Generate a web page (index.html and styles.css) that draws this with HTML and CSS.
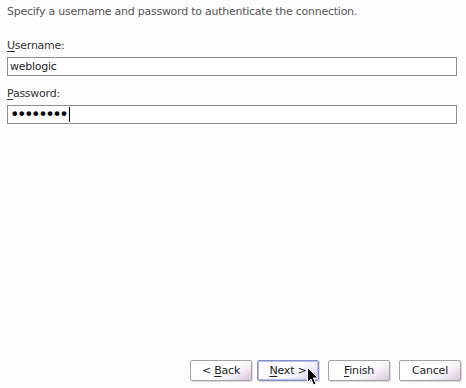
FILE: index.html
```html
<!DOCTYPE html>
<html lang="en">
<head>
    <meta charset="UTF-8">
    <title>Create Connection - Authentication</title>
    <link rel="stylesheet" href="styles.css">
</head>
<body>
    <div class="wizard">
        <p class="intro">Specify a username and password to authenticate the connection.</p>

        <div class="field">
            <label class="field-label"><u>U</u>sername:</label>
            <div class="text-field">weblogic</div>
        </div>

        <div class="field">
            <label class="field-label"><u>P</u>assword:</label>
            <div class="text-field focused"><span class="dots">••••••••</span><span class="caret"></span></div>
        </div>

        <div class="footer">
            <button class="btn">&lt; <u>B</u>ack</button>
            <button class="btn default"><u>N</u>ext &gt;</button>
            <button class="btn wide-gap"><u>F</u>inish</button>
            <button class="btn wide-gap">Cancel</button>

            <!-- mouse pointer sitting on Next -->
            <svg class="pointer" width="12" height="19" viewBox="0 0 12 19">
                <path d="M0.5 0.5 L0.5 15.5 L4 12 L6.5 18 L9 17 L6.5 11 L11 11 Z" fill="#000" stroke="#fff" stroke-width="1"/>
            </svg>
        </div>
    </div>
</body>
</html>
```

FILE: styles.css
```css
* { margin: 0; padding: 0; box-sizing: border-box; }
body {
    font-family: 'DejaVu Sans', sans-serif;
    font-size: 11px;
    letter-spacing: -0.25px;
    background-color: #fcfdfc;
    color: #333;
}
.wizard {
    width: 466px;
    height: 388px;
    display: flex;
    flex-direction: column;
    padding: 5px 9px 0 7px;
}
.intro {
    color: #555;
    line-height: 14px;
    margin-bottom: 20px;
}
.field {
    display: flex;
    flex-direction: column;
}
.field-label {
    line-height: 14px;
    margin-bottom: 4px;
}
.field-label u {
    text-decoration-thickness: 1px;
    text-underline-offset: 2px;
}
.text-field {
    height: 19px;
    border: 1px solid #8e8e8e;
    background-color: #fff;
    color: #222;
    padding: 0 2px;
    line-height: 17px;
    display: flex;
    align-items: center;
    margin-bottom: 11px;
}
.dots {
    font-size: 16px;
    line-height: 17px;
    letter-spacing: -2.4px;
    color: #000;
}
.caret {
    width: 1px;
    height: 15px;
    background: #000;
    margin-left: 3px;
}
.footer {
    margin-top: auto;
    position: relative;
    display: flex;
    justify-content: flex-end;
    padding: 0 0 7px;
    margin-right: -4px;
}
.btn {
    width: 62px;
    height: 21px;
    font-family: 'DejaVu Sans', sans-serif;
    font-size: 11px;
    letter-spacing: -0.2px;
    color: #222;
    border: 1px solid #a3a3a3;
    border-radius: 2px;
    background: linear-gradient(150deg, #ffffff 55%, #f1eaf3 75%, #d9c4dd 100%);
    box-shadow: 1px 1px 0 #e4d6e6;
    margin-left: 5px;
}
.btn u {
    text-underline-offset: 2px;
}
.btn.default {
    border-color: #8490c8;
    background: linear-gradient(150deg, #fdfdff 50%, #ebe8f7 75%, #c9c6e6 100%);
    box-shadow: inset 0 0 0 1px #b7bde3, 1px 1px 0 #e4d6e6;
}
.btn.wide-gap {
    margin-left: 9px;
}
.pointer {
    position: absolute;
    left: 300px;
    top: 7px;
}
```
